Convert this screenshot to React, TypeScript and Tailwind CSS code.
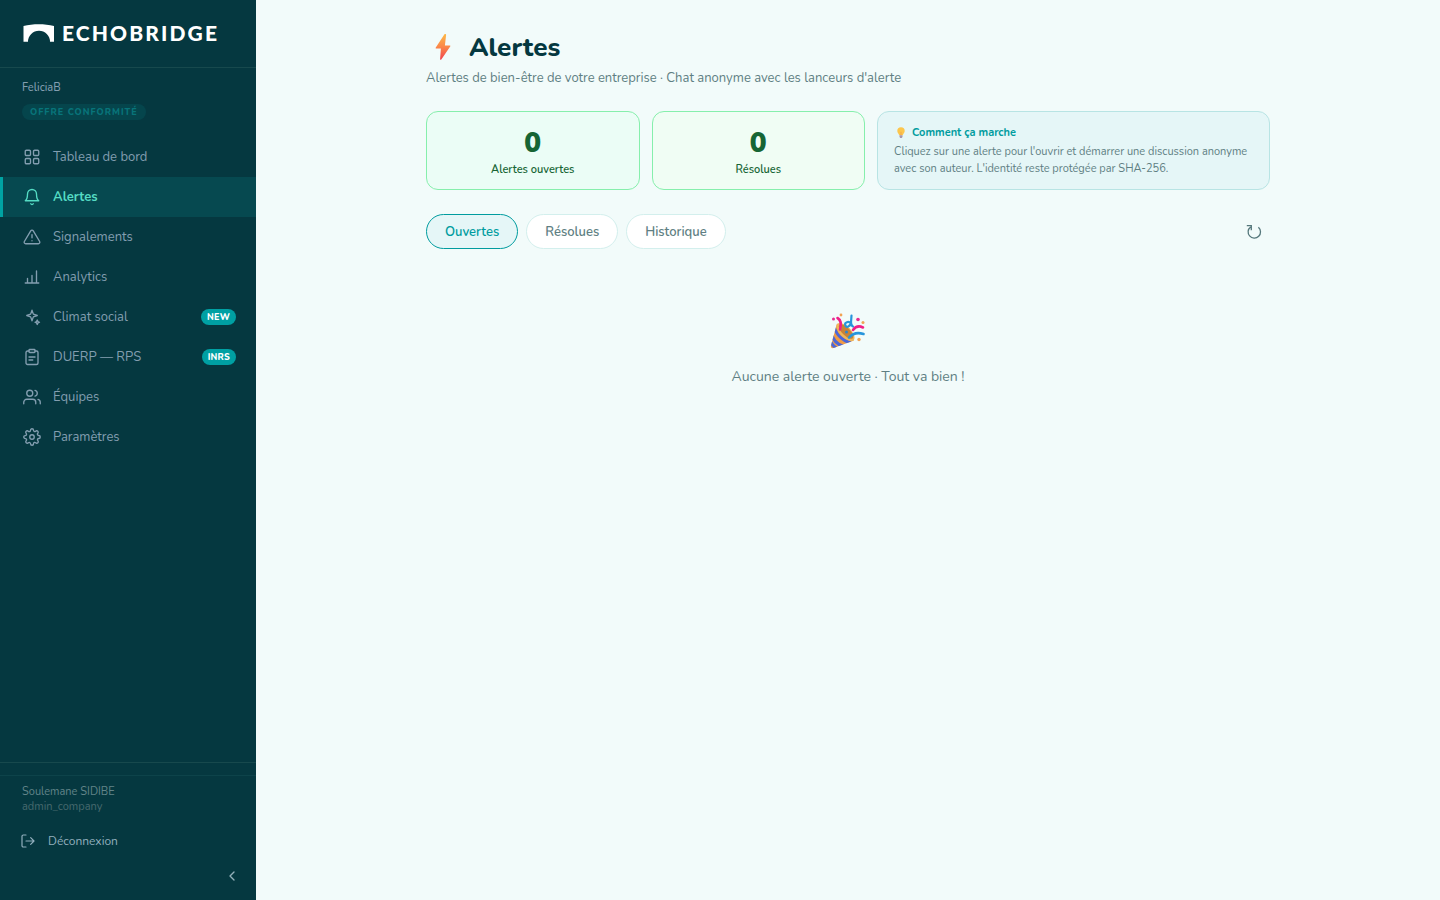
import React, { useState } from "react";
import clsx from "clsx";

const ICONS: Record<string, React.ReactNode> = {
  grid: (
    <>
      <rect x="3" y="3" width="7" height="7" rx="1.5" />
      <rect x="14" y="3" width="7" height="7" rx="1.5" />
      <rect x="3" y="14" width="7" height="7" rx="1.5" />
      <rect x="14" y="14" width="7" height="7" rx="1.5" />
    </>
  ),
  bell: (
    <>
      <path d="M18 8A6 6 0 0 0 6 8c0 7-3 9-3 9h18s-3-2-3-9" />
      <path d="M13.73 21a2 2 0 0 1-3.46 0" />
    </>
  ),
  warning: (
    <>
      <path d="M10.29 3.86 1.82 18a2 2 0 0 0 1.71 3h16.94a2 2 0 0 0 1.71-3L13.71 3.86a2 2 0 0 0-3.42 0z" />
      <path d="M12 9v4M12 17h.01" />
    </>
  ),
  chart: <path d="M18 20V4M12 20V10M6 20v-6M3 20h18" />,
  sparkles: (
    <>
      <path d="M12 3l1.8 5.2L19 10l-5.2 1.8L12 17l-1.8-5.2L5 10l5.2-1.8z" />
      <path d="M19 16l.9 2.1L22 19l-2.1.9L19 22l-.9-2.1L16 19l2.1-.9z" />
    </>
  ),
  clipboard: (
    <>
      <path d="M16 4h2a2 2 0 0 1 2 2v14a2 2 0 0 1-2 2H6a2 2 0 0 1-2-2V6a2 2 0 0 1 2-2h2" />
      <rect x="8" y="2" width="8" height="4" rx="1" />
      <path d="M8 12h8M8 16h5" />
    </>
  ),
  users: (
    <>
      <path d="M17 21v-2a4 4 0 0 0-4-4H5a4 4 0 0 0-4 4v2" />
      <circle cx="9" cy="7" r="4" />
      <path d="M23 21v-2a4 4 0 0 0-3-3.87M16 3.13a4 4 0 0 1 0 7.75" />
    </>
  ),
  settings: (
    <>
      <circle cx="12" cy="12" r="3" />
      <path d="M19.4 15a1.65 1.65 0 0 0 .33 1.82l.06.06a2 2 0 0 1 0 2.83 2 2 0 0 1-2.83 0l-.06-.06a1.65 1.65 0 0 0-1.82-.33 1.65 1.65 0 0 0-1 1.51V21a2 2 0 0 1-2 2 2 2 0 0 1-2-2v-.09A1.65 1.65 0 0 0 9 19.4a1.65 1.65 0 0 0-1.82.33l-.06.06a2 2 0 0 1-2.83 0 2 2 0 0 1 0-2.83l.06-.06a1.65 1.65 0 0 0 .33-1.82 1.65 1.65 0 0 0-1.51-1H3a2 2 0 0 1-2-2 2 2 0 0 1 2-2h.09A1.65 1.65 0 0 0 4.6 9a1.65 1.65 0 0 0-.33-1.82l-.06-.06a2 2 0 0 1 0-2.83 2 2 0 0 1 2.83 0l.06.06a1.65 1.65 0 0 0 1.82.33H9a1.65 1.65 0 0 0 1-1.51V3a2 2 0 0 1 2-2 2 2 0 0 1 2 2v.09a1.65 1.65 0 0 0 1 1.51 1.65 1.65 0 0 0 1.82-.33l.06-.06a2 2 0 0 1 2.83 0 2 2 0 0 1 0 2.83l-.06.06a1.65 1.65 0 0 0-.33 1.82V9a1.65 1.65 0 0 0 1.51 1H21a2 2 0 0 1 2 2 2 2 0 0 1-2 2h-.09a1.65 1.65 0 0 0-1.51 1z" />
    </>
  ),
  logout: <path d="M9 21H5a2 2 0 0 1-2-2V5a2 2 0 0 1 2-2h4M16 17l5-5-5-5M21 12H9" />,
  chevron: <path d="M15 18l-6-6 6-6" />,
};

function Icon({ name, size = 18, stroke = 1.8 }: { name: string; size?: number; stroke?: number }) {
  return (
    <svg
      width={size}
      height={size}
      viewBox="0 0 24 24"
      fill="none"
      stroke="currentColor"
      strokeWidth={stroke}
      strokeLinecap="round"
      strokeLinejoin="round"
      className="shrink-0"
      aria-hidden="true"
    >
      {ICONS[name]}
    </svg>
  );
}

function Bolt() {
  return (
    <svg width="34" height="34" viewBox="0 0 34 34" aria-hidden="true">
      <defs>
        <linearGradient id="bolt" x1="0" y1="0" x2="0" y2="1">
          <stop offset="0" stopColor="#fdb947" />
          <stop offset="0.5" stopColor="#fb8649" />
          <stop offset="1" stopColor="#f0424f" />
        </linearGradient>
      </defs>
      <path
        d="M18.3 4.5 9.8 17.6c-.4.6-.1 1 .5 1h4.6l-.8 10.4c-.1 1 .7 1.1 1.2.4l8.9-12.9c.4-.6.1-1-.5-1h-4.8l1.2-10.600c.1-1-1.200-1.200-1.800-.4z"
        fill="url(#bolt)"
      />
    </svg>
  );
}

function Bulb() {
  return (
    <svg width="14" height="14" viewBox="0 0 14 14" aria-hidden="true">
      <path d="M7 1.2a3.7 3.7 0 0 0-3.7 3.7c0 1.9 1.6 2.7 1.9 4.4h3.6c.3-1.7 1.9-2.5 1.9-4.4A3.7 3.7 0 0 0 7 1.2z" fill="#fcc64d" />
      <path d="M6.3 5.5 7 6.2l.7-.7v3.8H6.3z" fill="#f7b04a" />
      <path d="M5.5 9.3h3v1.5L7.9 12H6.1l-.6-1.2z" fill="#a897ab" />
    </svg>
  );
}

function PartyPopper() {
  return (
    <svg width="40" height="40" viewBox="0 0 40 40" aria-hidden="true">
      <defs>
        <clipPath id="cone">
          <path d="M9 12.5 3 34.5c-.5 2 .8 3 2.6 2.5L26 29.5z" />
        </clipPath>
      </defs>
      <path d="M9 12.5 3 34.5c-.5 2 .8 3 2.6 2.5L26 29.5z" fill="#f09b45" />
      <g clipPath="url(#cone)" fill="none" stroke="#4b67d8" strokeWidth="3">
        <path d="M6 14c1 8 7 15 17 18" />
        <path d="M3 20c1 8 6 14 14 16" />
        <path d="M1 27c2 6 5 9 9 11" />
      </g>
      <ellipse cx="17.5" cy="21" rx="11.5" ry="5.5" transform="rotate(45 17.5 21)" fill="#eeb65a" />
      <ellipse cx="18" cy="20.5" rx="9.5" ry="3.8" transform="rotate(45 18 20.5)" fill="#c88238" />
      <g fill="none" strokeLinecap="round" strokeWidth="2.6">
        <path d="M9.5 7c3.5 2 4 6 2.5 11.5" stroke="#f01f87" />
        <path d="M23 12.500c-2.500-3-6.500-1-5.800 1.500 1 3.500 5.300 1.500 5.800-2.500l.5-7M23 11c0 3 .5 4 2 4.500" stroke="#2795dc" strokeWidth="2.2" />
        <path d="M25 19c2.500-3.500 6-4.500 10-2.500" stroke="#f01f87" />
        <path d="M21 26.500c4-4.500 8.500-5.500 14.500-3.500" stroke="#2795dc" />
      </g>
      <circle cx="18.5" cy="21" r="1.5" fill="#2a85cf" />
      <circle cx="30" cy="8.5" r="1.8" fill="#e62b91" />
      <circle cx="5.5" cy="8" r="1.5" fill="#e62b91" />
      <circle cx="13" cy="4" r="1.4" fill="#f2a253" />
      <circle cx="35" cy="11.5" r="1.5" fill="#f2a253" />
      <circle cx="31" cy="28.5" r="1.7" fill="#f2a253" />
    </svg>
  );
}

const NAV = [
  { icon: "grid", label: "Tableau de bord" },
  { icon: "bell", label: "Alertes" },
  { icon: "warning", label: "Signalements" },
  { icon: "chart", label: "Analytics" },
  { icon: "sparkles", label: "Climat social", badge: "NEW" },
  { icon: "clipboard", label: "DUERP — RPS", badge: "INRS" },
  { icon: "users", label: "Équipes" },
  { icon: "settings", label: "Paramètres" },
];

const TABS = ["Ouvertes", "Résolues", "Historique"];

function Sidebar() {
  return (
    <aside className="flex w-64 shrink-0 flex-col bg-[#053840] text-[#839eb0]">
      <div className="flex h-[68px] items-center gap-[7px] border-b border-[#17494d] px-[23px] pb-0.5 text-white">
        <svg width="32" height="18" viewBox="0 0 32 18" fill="currentColor" aria-hidden="true">
          <path d="M.5 2C10-.3 21.5-.3 31 2v15.700h-4a11 11 0 0 0-22 0H.5z" />
        </svg>
        <span className="font-[Lato,sans-serif] text-[21px] leading-6 font-black tracking-widest">ECHOBRIDGE</span>
      </div>

      <div className="px-[22px] pt-[11px]">
        <p className="text-[11px] leading-[18px] font-medium">FeliciaB</p>
        <p className="mt-[7px] w-fit rounded-full bg-[#05454c] px-2 text-[9px] leading-4 font-extrabold tracking-[1px] text-[#08747a]">
          OFFRE CONFORMITÉ
        </p>
      </div>

      <nav className="mt-[17px] flex flex-col">
        {NAV.map((item) => {
          const active = item.label === "Alertes";
          return (
            <a
              key={item.label}
              href="#"
              className={clsx(
                "flex h-10 items-center gap-3 border-l-3 pr-5 pl-5 text-[13px] leading-[21px]",
                active ? "border-[#00a3a3] bg-[#064950] font-bold text-[#55dcc4]" : "border-transparent",
              )}
            >
              <Icon name={item.icon} />
              <span className="flex-1 pt-px">{item.label}</span>
              {item.badge && (
                <span className="rounded-full bg-[#00a0a3] px-1.5 text-[9px] leading-4 font-extrabold tracking-wide text-white">
                  {item.badge}
                </span>
              )}
            </a>
          );
        })}
      </nav>

      <div className="mt-auto border-t border-[#17494d] pt-3">
        <div className="border-t border-[#0d434a] px-[22px] pt-2">
          <p className="text-[11px] leading-[15px] text-[#628489]">Soulemane SIDIBE</p>
          <p className="text-[11px] leading-[15px] text-[#45696e]">admin_company</p>
        </div>
        <button type="button" className="mt-3 flex h-[30px] w-full items-center gap-3 px-5 text-xs text-[#92afbd]">
          <Icon name="logout" size={16} />
          Déconnexion
        </button>
        <div className="flex justify-end px-4 pt-3 pb-4">
          <button type="button" aria-label="Réduire le menu" className="text-[#94b0ba]">
            <Icon name="chevron" size={16} stroke={2} />
          </button>
        </div>
      </div>
    </aside>
  );
}

export default function App() {
  const [tab, setTab] = useState("Ouvertes");

  return (
    <div className="flex min-h-screen bg-[#f2fbfa] font-[Nunito,Lato,sans-serif]">
      <Sidebar />

      <main className="min-w-0 flex-1">
        <div className="mx-auto max-w-[900px] px-7 py-7">
          <header>
            <h1 className="flex h-[38px] items-center gap-[9px] text-[26px] font-extrabold text-[#053840]">
              <Bolt />
              Alertes
            </h1>
            <p className="mt-0.5 text-[13px] leading-5 text-[#5f7f83]">
              Alertes de bien-être de votre entreprise · Chat anonyme avec les lanceurs d'alerte
            </p>
          </header>

          {/* Compteurs */}
          <section className="mt-[23px] flex gap-3">
            <div className="flex-1 rounded-xl border border-[#86efac] bg-[#ebfdf6] px-4 pt-4 pb-[11px] text-center text-[#166534]">
              <div className="text-[28px] leading-[30px] font-black">0</div>
              <div className="mt-1 text-[11px] leading-4 font-semibold">Alertes ouvertes</div>
            </div>
            <div className="flex-1 rounded-xl border border-[#86efac] bg-[#f0fdf4] px-4 pt-4 pb-[11px] text-center text-[#166534]">
              <div className="text-[28px] leading-[30px] font-black">0</div>
              <div className="mt-1 text-[11px] leading-4 font-semibold">Résolues</div>
            </div>
            <div className="flex-2 rounded-xl border border-[#b8e4e4] bg-[#e5f6f7] px-4 pt-[13px] pb-3">
              <h2 className="flex items-center gap-1 text-[11px] leading-4 font-bold text-[#009c9f]">
                <Bulb />
                Comment ça marche
              </h2>
              <p className="mt-0.5 text-[11px] leading-[17px] text-[#5f7f83]">
                Cliquez sur une alerte pour l'ouvrir et démarrer une discussion anonyme avec son auteur. L'identité reste
                protégée par SHA-256.
              </p>
            </div>
          </section>

          <div className="mt-6 flex items-center gap-2">
            {TABS.map((name) => (
              <button
                key={name}
                type="button"
                onClick={() => setTab(name)}
                className={clsx(
                  "h-[35px] rounded-full border px-[18px] pt-0.5 text-[13px] font-semibold",
                  tab === name
                    ? "border-[#009c9f] bg-[#e5f6f7] text-[#009c9f]"
                    : "border-[#d3efed] bg-white text-[#5f7f83]",
                )}
              >
                {name}
              </button>
            ))}
            <button type="button" aria-label="Actualiser" className="mr-2 ml-auto text-[#55777b]">
              <svg width="16" height="16" viewBox="0 0 16 16" fill="none" stroke="currentColor" strokeWidth="1.3" aria-hidden="true">
                <path d="M12.4 3.2a6.2 6.2 0 1 1-7.8-.3M.8 1.7h4.5v4.5" />
              </svg>
            </button>
          </div>

          {/* Liste vide */}
          <section className="mt-[62px] flex flex-col items-center gap-3.5">
            <PartyPopper />
            <p className="text-sm leading-6 text-[#5f7f83]">Aucune alerte ouverte · Tout va bien !</p>
          </section>
        </div>
      </main>
    </div>
  );
}
